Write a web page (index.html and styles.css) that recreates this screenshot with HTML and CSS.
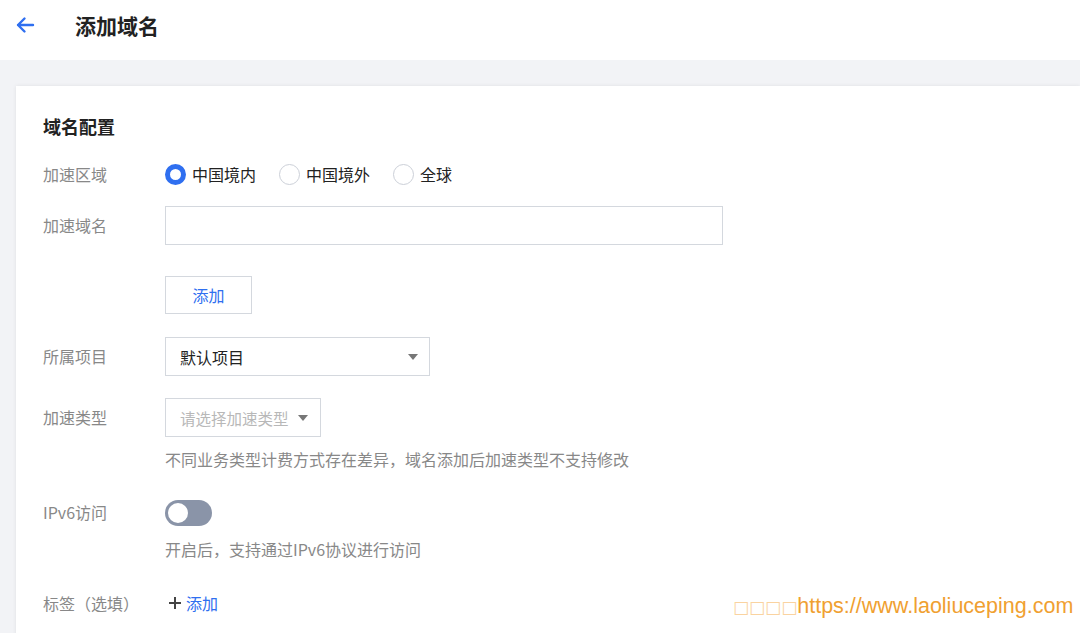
FILE: index.html
```html
<!DOCTYPE html>
<html lang="zh">
<head>
<meta charset="utf-8">
<link rel="stylesheet" href="styles.css">
</head>
<body>
<header class="topbar">
  <svg class="back" width="20" height="18" viewBox="0 0 20 18"><path d="M18 9H3M9.5 2.5L3 9l6.5 6.5" fill="none" stroke="#2f6ff0" stroke-width="2.4" stroke-linecap="round" stroke-linejoin="round"/></svg>
  <h1 class="title">添加域名</h1>
</header>
<main class="page">
  <section class="card">
    <h2 class="section-title">域名配置</h2>
    <div class="row row-radio">
      <div class="label">加速区域</div>
      <div class="control radios">
        <label class="radio"><span class="dot on"></span>中国境内</label>
        <label class="radio"><span class="dot"></span>中国境外</label>
        <label class="radio"><span class="dot"></span>全球</label>
      </div>
    </div>
    <div class="row row-input">
      <div class="label">加速域名</div>
      <div class="control">
        <div class="input"></div>
        <div class="btn">添加</div>
      </div>
    </div>
    <div class="row row-select">
      <div class="label">所属项目</div>
      <div class="control">
        <div class="select wide"><span>默认项目</span><span class="caret"></span></div>
      </div>
    </div>
    <div class="row row-select2">
      <div class="label">加速类型</div>
      <div class="control">
        <div class="select narrow placeholder"><span>请选择加速类型</span><span class="caret"></span></div>
        <p class="help">不同业务类型计费方式存在差异，域名添加后加速类型不支持修改</p>
      </div>
    </div>
    <div class="row row-toggle">
      <div class="label">IPv6访问</div>
      <div class="control">
        <div class="toggle"><span class="knob"></span></div>
        <p class="help">开启后，支持通过IPv6协议进行访问</p>
      </div>
    </div>
    <div class="row row-tag">
      <div class="label">标签（选填）</div>
      <div class="control">
        <span class="link"><svg class="plus" width="14" height="14" viewBox="0 0 14 14"><path d="M7 1v12M1 7h12" stroke="#444" stroke-width="2"/></svg>添加</span>
      </div>
    </div>
    <div class="watermark"><span class="tofu">□□□□</span>https://www.laoliuceping.com</div>
  </section>
</main>
</body>
</html>
```

FILE: styles.css
```css
* { box-sizing: border-box; margin: 0; padding: 0; }
html, body { width: 1080px; height: 633px; overflow: hidden; }
body {
  background: #f2f3f6;
  font-family: "Noto Sans CJK SC", "Noto Sans", sans-serif;
  color: #222;
}
.topbar {
  height: 60px;
  background: #fff;
  display: flex;
  align-items: center;
  padding-left: 15px;
  padding-bottom: 10px;
}
.back { display: block; }
.title {
  font-size: 21px;
  font-weight: 700;
  color: #222;
  margin-left: 40px;
  line-height: 1;
}
.page { padding: 26px 0 0 16px; }
.card {
  position: relative;
  background: #fff;
  height: 560px;
  box-shadow: 0 0 4px rgba(0,0,0,0.08);
  padding: 28px 0 0 27px;
}
.section-title {
  font-size: 18px;
  font-weight: 700;
  line-height: 24px;
  color: #222;
}
.row { display: flex; }
.label {
  width: 122px;
  font-size: 16px;
  color: #888;
  line-height: 22px;
  flex: none;
}
.control { display: flex; flex-direction: column; align-items: flex-start; }
.row-radio { margin-top: 25px; }
.radios { flex-direction: row; align-items: center; gap: 0; }
.radio {
  display: flex;
  align-items: center;
  font-size: 16px;
  color: #222;
  line-height: 22px;
  margin-right: 23px;
}
.dot {
  width: 21px;
  height: 21px;
  border-radius: 50%;
  border: 1px solid #ccd0d8;
  margin-right: 6px;
  background: #fff;
}
.dot.on { border: 5px solid #2f6ff0; }
.row-input { margin-top: 21px; }
.row-input .label { padding-top: 8px; }
.input {
  width: 558px;
  height: 39px;
  border: 1px solid #d4d8de;
}
.btn {
  margin-top: 31px;
  width: 87px;
  height: 38px;
  border: 1px solid #d4d8de;
  color: #2f6ff0;
  font-size: 16px;
  display: flex;
  align-items: center;
  justify-content: center;
}
.row-select { margin-top: 23px; }
.row-select .label, .row-select2 .label { padding-top: 8px; }
.select {
  height: 39px;
  border: 1px solid #d4d8de;
  display: flex;
  align-items: center;
  justify-content: space-between;
  padding: 0 11px 0 14px;
  font-size: 16px;
  color: #222;
}
.select.wide { width: 265px; }
.select.narrow { width: 156px; padding-right: 12px; font-size: 15.5px; }
.placeholder { color: #b8b8b8; }
.caret {
  width: 0; height: 0;
  border-left: 5px solid transparent;
  border-right: 5px solid transparent;
  border-top: 6px solid #777;
  flex: none;
}
.row-select2 { margin-top: 22px; }
.help {
  font-size: 16px;
  color: #888;
  line-height: 22px;
  margin-top: 11px;
}
.row-toggle { margin-top: 30px; }
.row-toggle .label { padding-top: 1px; }
.toggle {
  width: 47px;
  height: 26px;
  border-radius: 13px;
  background: #8a94a8;
  padding: 3px;
}
.knob {
  display: block;
  width: 20px;
  height: 20px;
  border-radius: 50%;
  background: #fff;
}
.row-toggle .help { margin-top: 12px; }
.row-tag { margin-top: 32px; }
.link {
  font-size: 16px;
  color: #2f6ff0;
  line-height: 22px;
  display: flex;
  align-items: center;
}
.plus {
  display: block;
  margin-left: 3px;
  margin-right: 4px;
}
.watermark {
  position: absolute;
  left: 717px;
  top: 508px;
  font-family: "Liberation Sans", Arial, sans-serif;
  font-size: 21.5px;
  color: #f0a030;
  white-space: nowrap;
}
.tofu { color: #fad3a0; font-family: "DejaVu Sans", sans-serif; font-size: 17px; letter-spacing: 0; }
```
